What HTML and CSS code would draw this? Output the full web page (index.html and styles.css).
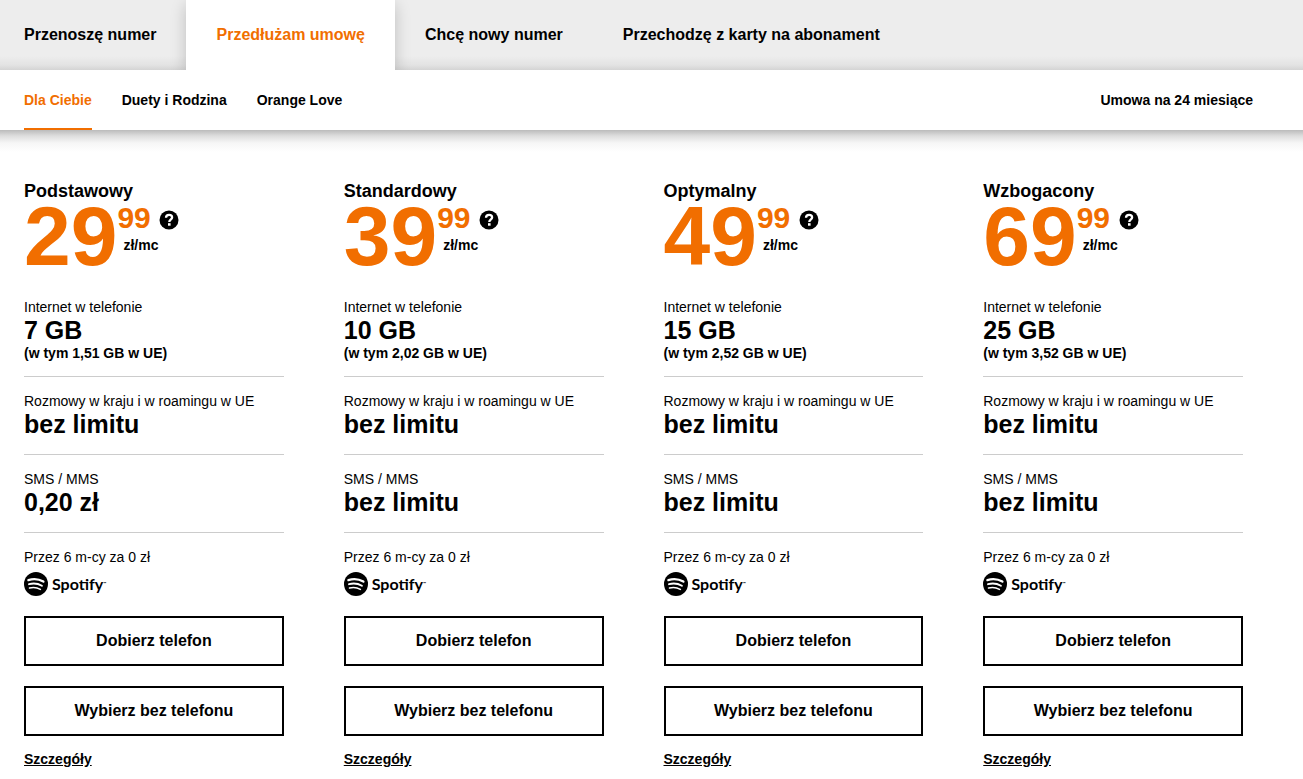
FILE: index.html
```
<!DOCTYPE html>
<html lang="pl">
<head>
  <meta charset="UTF-8">
  <title>Przedłużam umowę</title>
  <meta name="viewport" content="width=device-width, initial-scale=1">
  <link rel="stylesheet" href="styles.css">
</head>
<body>

<!-- Shared icons -->
<svg class="sprite" aria-hidden="true">
  <symbol id="icon-spotify" viewBox="0 0 24 24">
    <circle cx="12" cy="12" r="12" fill="#000" />
    <g fill="none" stroke="#fff" stroke-linecap="round">
      <path d="M4.400 8.100c5-1.500 10.600-1 15 1.500" stroke-width="2.300" />
      <path d="M5 12.200c4.400-1.200 9-.7 12.900 1.600" stroke-width="1.900" />
      <path d="M5.500 16c3.800-.9 7.600-.5 10.900 1.400" stroke-width="1.500" />
    </g>
  </symbol>
  <symbol id="icon-help" viewBox="0 0 20 20">
    <circle cx="10" cy="10" r="9.500" fill="#000" />
    <path d="M7 7.800c0-2 1.300-3 3.100-3s3 1 3 2.600c0 2.200-2.800 2.300-2.800 4.500" fill="none" stroke="#fff" stroke-width="2.300" />
    <rect x="9" y="13.200" width="2.600" height="2.500" fill="#fff" />
  </symbol>
</svg>

<nav class="tabs" aria-label="Rodzaj umowy">
  <a href="#" class="tab">Przenoszę numer</a>
  <a href="#" class="tab active" aria-current="page">Przedłużam umowę</a>
  <a href="#" class="tab">Chcę nowy numer</a>
  <a href="#" class="tab">Przechodzę z karty na abonament</a>
</nav>

<div class="subnav">
  <nav class="subnav-links" aria-label="Oferta">
    <a href="#" class="active" aria-current="page">Dla Ciebie</a>
    <a href="#">Duety i Rodzina</a>
    <a href="#">Orange Love</a>
  </nav>
  <span>Umowa na 24 miesiące</span>
</div>

<main class="plans">

  <section class="plan">
    <h2>Podstawowy</h2>
    <div class="price">
      <span class="amount">29</span>
      <div class="rest">
        <span class="cents">99</span>
        <span class="unit">zł/mc</span>
      </div>
      <button type="button" class="help" aria-label="Więcej informacji"><svg><use href="#icon-help" /></svg></button>
    </div>
    <div class="feature">
      <p>Internet w telefonie</p>
      <strong>7 GB</strong>
      <small>(w tym 1,51 GB w UE)</small>
    </div>
    <div class="feature">
      <p>Rozmowy w kraju i w roamingu w UE</p>
      <strong>bez limitu</strong>
    </div>
    <div class="feature">
      <p>SMS / MMS</p>
      <strong>0,20 zł</strong>
    </div>
    <div class="feature">
      <p>Przez 6 m-cy za 0 zł</p>
      <div class="spotify"><svg><use href="#icon-spotify" /></svg><span>Spotify</span></div>
    </div>
    <button type="button" class="btn">Dobierz telefon</button>
    <button type="button" class="btn">Wybierz bez telefonu</button>
    <a href="#" class="details">Szczegóły</a>
  </section>

  <section class="plan">
    <h2>Standardowy</h2>
    <div class="price">
      <span class="amount">39</span>
      <div class="rest">
        <span class="cents">99</span>
        <span class="unit">zł/mc</span>
      </div>
      <button type="button" class="help" aria-label="Więcej informacji"><svg><use href="#icon-help" /></svg></button>
    </div>
    <div class="feature">
      <p>Internet w telefonie</p>
      <strong>10 GB</strong>
      <small>(w tym 2,02 GB w UE)</small>
    </div>
    <div class="feature">
      <p>Rozmowy w kraju i w roamingu w UE</p>
      <strong>bez limitu</strong>
    </div>
    <div class="feature">
      <p>SMS / MMS</p>
      <strong>bez limitu</strong>
    </div>
    <div class="feature">
      <p>Przez 6 m-cy za 0 zł</p>
      <div class="spotify"><svg><use href="#icon-spotify" /></svg><span>Spotify</span></div>
    </div>
    <button type="button" class="btn">Dobierz telefon</button>
    <button type="button" class="btn">Wybierz bez telefonu</button>
    <a href="#" class="details">Szczegóły</a>
  </section>

  <section class="plan">
    <h2>Optymalny</h2>
    <div class="price">
      <span class="amount">49</span>
      <div class="rest">
        <span class="cents">99</span>
        <span class="unit">zł/mc</span>
      </div>
      <button type="button" class="help" aria-label="Więcej informacji"><svg><use href="#icon-help" /></svg></button>
    </div>
    <div class="feature">
      <p>Internet w telefonie</p>
      <strong>15 GB</strong>
      <small>(w tym 2,52 GB w UE)</small>
    </div>
    <div class="feature">
      <p>Rozmowy w kraju i w roamingu w UE</p>
      <strong>bez limitu</strong>
    </div>
    <div class="feature">
      <p>SMS / MMS</p>
      <strong>bez limitu</strong>
    </div>
    <div class="feature">
      <p>Przez 6 m-cy za 0 zł</p>
      <div class="spotify"><svg><use href="#icon-spotify" /></svg><span>Spotify</span></div>
    </div>
    <button type="button" class="btn">Dobierz telefon</button>
    <button type="button" class="btn">Wybierz bez telefonu</button>
    <a href="#" class="details">Szczegóły</a>
  </section>

  <section class="plan">
    <h2>Wzbogacony</h2>
    <div class="price">
      <span class="amount">69</span>
      <div class="rest">
        <span class="cents">99</span>
        <span class="unit">zł/mc</span>
      </div>
      <button type="button" class="help" aria-label="Więcej informacji"><svg><use href="#icon-help" /></svg></button>
    </div>
    <div class="feature">
      <p>Internet w telefonie</p>
      <strong>25 GB</strong>
      <small>(w tym 3,52 GB w UE)</small>
    </div>
    <div class="feature">
      <p>Rozmowy w kraju i w roamingu w UE</p>
      <strong>bez limitu</strong>
    </div>
    <div class="feature">
      <p>SMS / MMS</p>
      <strong>bez limitu</strong>
    </div>
    <div class="feature">
      <p>Przez 6 m-cy za 0 zł</p>
      <div class="spotify"><svg><use href="#icon-spotify" /></svg><span>Spotify</span></div>
    </div>
    <button type="button" class="btn">Dobierz telefon</button>
    <button type="button" class="btn">Wybierz bez telefonu</button>
    <a href="#" class="details">Szczegóły</a>
  </section>

</main>

</body>
</html>
```

FILE: styles.css
```
* { box-sizing: border-box; }
body { margin: 0; background: #fff; color: #000; font: 14px/20px "Liberation Sans", Arial, sans-serif; }
a { color: inherit; text-decoration: none; }
p, h2 { margin: 0; }
.sprite { display: none; }

/* Top tabs */
.tabs { display: flex; height: 70px; overflow: hidden; background: linear-gradient(to top, #d4d4d4, #e3e3e3 5px, #ededed 14px); font-size: 16px; font-weight: bold; }
.tab { padding: 0 30px; line-height: 70px; }
.tab:first-child { padding-left: 24px; }
.tab.active { background: #fff; color: #f16e00; box-shadow: 0 5px 15px rgba(0, 0, 0, 0.2); }

/* Second level */
.subnav { display: flex; justify-content: space-between; height: 60px; padding: 0 50px 0 24px; background: #fff; font-weight: bold; line-height: 60px; }
.subnav-links { display: flex; gap: 30px; }
.subnav-links .active { border-bottom: 2px solid #f16e00; color: #f16e00; }

/* Plans */
.plans { display: grid; grid-template-columns: repeat(4, 1fr); padding: 50px 0 8px 24px; background: linear-gradient(#bbb, #dedede 6px, #f6f6f6 13px, #fff 22px); }
.plan { padding-right: 60px; }
.plan h2 { font-size: 18px; line-height: 22px; }
.price { display: flex; align-items: flex-start; height: 80px; margin-bottom: 15px; color: #f16e00; font-weight: bold; }
.amount { font-size: 84px; line-height: 68px; }
.rest { display: flex; flex-direction: column; }
.cents { font-size: 30px; line-height: 32px; }
.unit { padding-left: 6px; color: #000; line-height: 22px; }
.help { width: 20px; height: 20px; margin: 8px 0 0 1px; padding: 0; border: 0; background: none; cursor: pointer; }
.help svg { display: block; width: 20px; height: 20px; }

.feature { padding: 14px 0 17px; border-top: 1px solid #ccc; }
.price + .feature { padding: 0 0 13px; border-top: 0; }
.feature:last-of-type { padding-bottom: 16px; }
.feature strong { display: block; font-size: 25px; line-height: 26px; }
.feature small { display: block; font-size: 14px; font-weight: bold; line-height: 20px; }

.spotify { display: flex; align-items: center; gap: 4px; height: 33px; font: bold 16px/24px Lato, sans-serif; }
.spotify svg { width: 24px; height: 24px; }
.spotify span::after { content: "™"; font-size: 4px; vertical-align: 5px; }

.btn { display: block; width: 100%; height: 50px; margin-bottom: 20px; border: 2px solid #000; background: #fff; color: #000; font: bold 16px/20px "Liberation Sans", Arial, sans-serif; cursor: pointer; }
.btn + .btn { margin-bottom: 13px; }
.details { font-weight: bold; text-decoration: underline; }
```
